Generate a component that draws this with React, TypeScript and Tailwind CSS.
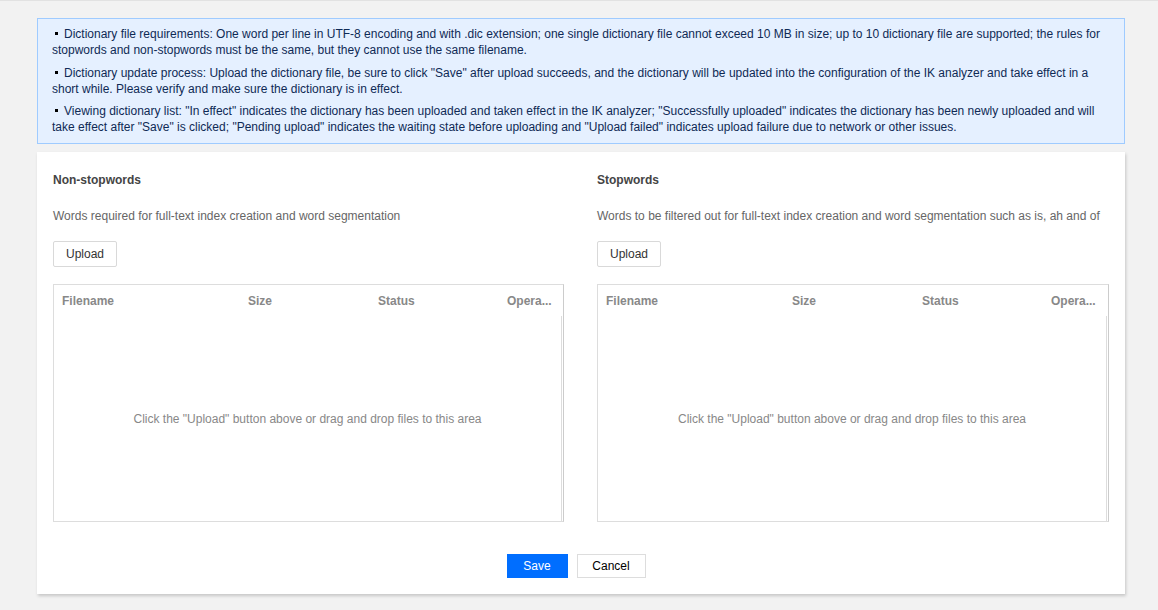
import React from "react";

const font = { fontFamily: '"Liberation Sans", Arial, sans-serif' };

function Bullet() {
  return <span className="inline-block w-[3px] h-[3px] bg-black ml-[3px] mr-[6px] align-middle relative top-[-1px]" />;
}

function DictColumn({ title, desc }: { title: string; desc: string }) {
  return (
    <div className="flex flex-col">
      <div className="h-[20px] leading-[20px] text-[12px] font-bold text-[#444]">{title}</div>
      <div className="mt-[16px] h-[20px] leading-[20px] text-[12px] text-[#666] whitespace-nowrap">{desc}</div>
      <div className="mt-[15px]">
        <button className="h-[26px] px-[12px] border border-[#d9d9d9] rounded-[2px] bg-white text-[12px] text-[#333] leading-[24px]">
          Upload
        </button>
      </div>
      <div className="mt-[17px] h-[238px] flex flex-col border-t border-l border-b border-[#ddd] border-r border-r-dashed border-r-[#ccc]">
        <div className="h-[31px] grid grid-cols-[185px_130px_129px_1fr] items-center text-[12px] font-bold text-[#888] pr-[2px]">
          <div className="pl-[8px]">Filename</div>
          <div className="pl-[9px]">Size</div>
          <div className="pl-[9px]">Status</div>
          <div className="pl-[9px] whitespace-nowrap overflow-hidden">Opera...</div>
        </div>
        <div className="flex-1 mr-[1px] border-r border-[#ddd] flex items-center justify-center text-[12px] text-[#888]">
          Click the "Upload" button above or drag and drop files to this area
        </div>
      </div>
    </div>
  );
}

export default function App() {
  return (
    <div className="min-h-[610px] bg-[#f2f2f2] border-t border-[#e2e2e2]" style={font}>
      <div className="pt-[17px] ml-[37px] mr-[33px] pb-[16px]">
        <div className="bg-[#e5f0ff] border border-[#9fcbff] pl-[14px] pr-[18px] pt-[7px] pb-[8px] text-[12px] leading-[16px] text-[#0f2a55]">
          <p>
            <Bullet />Dictionary file requirements: One word per line in UTF-8 encoding and with .dic extension; one single dictionary file cannot exceed 10 MB in size; up to 10 dictionary file are supported; the rules for stopwords and non-stopwords must be the same, but they cannot use the same filename.
          </p>
          <p className="mt-[7px]">
            <Bullet />Dictionary update process: Upload the dictionary file, be sure to click "Save" after upload succeeds, and the dictionary will be updated into the configuration of the IK analyzer and take effect in a short while. Please verify and make sure the dictionary is in effect.
          </p>
          <p className="mt-[6px]">
            <Bullet />Viewing dictionary list: "In effect" indicates the dictionary has been uploaded and taken effect in the IK analyzer; "Successfully uploaded" indicates the dictionary has been newly uploaded and will take effect after "Save" is clicked; "Pending upload" indicates the waiting state before uploading and "Upload failed" indicates upload failure due to network or other issues.
          </p>
        </div>
        <div className="mt-[8px] bg-white shadow-[1px_2px_3px_rgba(0,0,0,0.18)] px-[16px] pt-[18px] pb-[16px]">
          <div className="grid grid-cols-[511px_1fr] gap-[33px]">
            <DictColumn title="Non-stopwords" desc="Words required for full-text index creation and word segmentation" />
            <DictColumn title="Stopwords" desc="Words to be filtered out for full-text index creation and word segmentation such as is, ah and of" />
          </div>
          <div className="mt-[32px] flex justify-center gap-[9px] pr-[10px]">
            <button className="h-[24px] w-[61px] bg-[#006eff] text-white text-[12px]">Save</button>
            <button className="h-[24px] w-[69px] bg-white border border-[#ddd] text-[#000] text-[12px]">Cancel</button>
          </div>
        </div>
      </div>
    </div>
  );
}
